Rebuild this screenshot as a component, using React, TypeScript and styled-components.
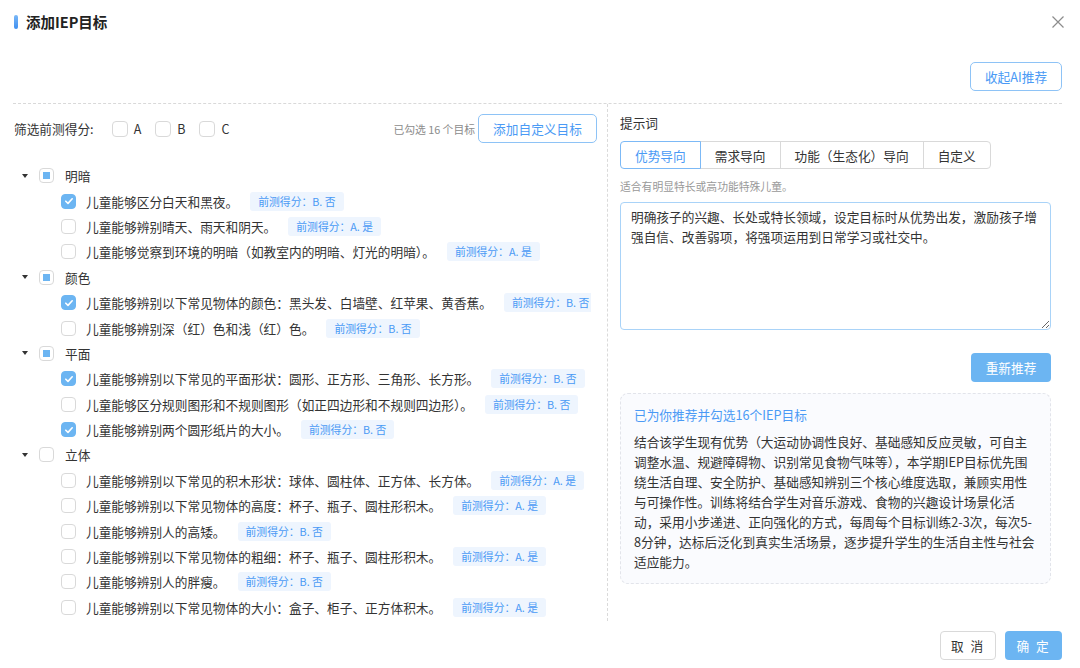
import React, { FC } from "react";
import styled, { createGlobalStyle } from "styled-components";

const GlobalStyle = createGlobalStyle`
  body {
    margin: 0;
    background: #fff;
    font-family: "Noto Sans CJK SC", "Noto Sans", sans-serif;
    color: #333;
  }
`;

const BLUE = "#4a9af5";
const LIGHT_BLUE = "#6cb5f2";
const FS = "12.7px";

const Modal = styled.div`
  width: 1080px;
  height: 668px;
  display: flex;
  flex-direction: column;
  background: #fff;
  overflow: hidden;
`;

const Header = styled.div`
  height: 43px;
  display: flex;
  align-items: center;
  justify-content: space-between;
  padding: 0 15px 0 14px;
`;

const Title = styled.div`
  display: flex;
  align-items: center;
  gap: 8px;
  font-size: 14.5px;
  font-weight: 700;
  color: #222;
`;

const TitleBar = styled.span`
  width: 4px;
  height: 14px;
  border-radius: 2px;
  background: linear-gradient(180deg, #7ab8f7, #3f8ff0);
`;

const CloseBtn = styled.button`
  border: none;
  background: none;
  padding: 0;
  width: 14px;
  height: 14px;
  cursor: pointer;
  display: flex;
`;

const Toolbar = styled.div`
  display: flex;
  justify-content: flex-end;
  padding: 19px 18px 12px;
`;

const GhostButton = styled.button<{ $w?: number }>`
  height: 29px;
  width: ${(p) => (p.$w ? `${p.$w}px` : "auto")};
  padding: 0;
  white-space: nowrap;
  border: 1px solid #8ec3f6;
  border-radius: 5px;
  background: #fff;
  color: ${BLUE};
  font-family: inherit;
  font-size: ${FS};
  cursor: pointer;
`;

const Body = styled.div`
  margin: 0 18px 0 13px;
  border-top: 1px dashed #d9d9d9;
  height: 517px;
  display: grid;
  grid-template-columns: 595px 1fr;
`;

const LeftCol = styled.div`
  border-right: 1px dashed #dadada;
  padding-right: 10px;
  display: flex;
  flex-direction: column;
  overflow: hidden;
`;

const FilterRow = styled.div`
  margin-top: 10px;
  height: 29px;
  display: flex;
  align-items: center;
  font-size: ${FS};
  padding-left: 1px;
`;

const FilterLabel = styled.span`
  margin-right: 18px;
`;

const FilterOption = styled.label`
  display: flex;
  align-items: center;
  gap: 6px;
  margin-right: 14px;
  font-size: 12.5px;
`;

const Spacer = styled.div`
  flex: 1;
`;

const Counter = styled.span`
  font-size: 10.8px;
  color: #8c8c8c;
  margin-right: 3px;
`;

const Tree = styled.div`
  margin-top: 20px;
  margin-right: 6px;
  overflow: hidden;
  flex: 1;
`;

const Row = styled.div<{ $child?: boolean }>`
  height: 25.4px;
  display: flex;
  align-items: center;
  white-space: nowrap;
  padding-left: ${(p) => (p.$child ? "48px" : "8px")};
  font-size: ${FS};
  color: #333;
`;

const Caret = styled.span`
  width: 8px;
  display: flex;
  justify-content: center;
  margin-right: 10px;
  &::before {
    content: "";
    border-left: 3.5px solid transparent;
    border-right: 3.5px solid transparent;
    border-top: 4.5px solid #333;
  }
`;

const Box = styled.span<{ $state: "on" | "off" | "half"; $size?: number }>`
  flex-shrink: 0;
  width: ${(p) => p.$size ?? 15}px;
  height: ${(p) => p.$size ?? 15}px;
  box-sizing: border-box;
  border-radius: 4px;
  border: 1px solid ${(p) => (p.$state === "on" ? LIGHT_BLUE : "#d9d9d9")};
  background: ${(p) => (p.$state === "on" ? LIGHT_BLUE : "#fff")};
  display: flex;
  align-items: center;
  justify-content: center;
  &::after {
    content: "";
    display: ${(p) => (p.$state === "half" ? "block" : "none")};
    width: 7px;
    height: 7px;
    background: ${LIGHT_BLUE};
  }
`;

const GroupLabel = styled.span`
  margin-left: 11px;
`;

const ItemText = styled.span`
  margin-left: 10px;
`;

const Tag = styled.span`
  flex-shrink: 0;
  margin-left: 12px;
  height: 19px;
  line-height: 19px;
  padding: 0 8px;
  border-radius: 3px;
  background: #eef5fe;
  color: ${BLUE};
  font-size: 10.8px;
`;

const RightCol = styled.div`
  padding: 9px 11px 0 12px;
  display: flex;
  flex-direction: column;
`;

const SectionLabel = styled.div`
  font-size: ${FS};
  line-height: 20px;
  margin-bottom: 8px;
`;

const Tabs = styled.div`
  display: flex;
`;

const TabItem = styled.div<{ $active?: boolean }>`
  height: 28px;
  box-sizing: border-box;
  padding: 0 14px;
  display: flex;
  align-items: center;
  font-size: ${FS};
  border: 1px solid ${(p) => (p.$active ? "#7cb9f6" : "#d9d9d9")};
  color: ${(p) => (p.$active ? BLUE : "#333")};
  margin-left: -1px;
  position: relative;
  z-index: ${(p) => (p.$active ? 1 : 0)};
  &:first-child {
    margin-left: 0;
    border-radius: 4px 0 0 4px;
  }
  &:last-child {
    border-radius: 0 4px 4px 0;
  }
`;

const Hint = styled.div`
  margin-top: 9px;
  font-size: 10.8px;
  color: #999;
  line-height: 16px;
`;

const Prompt = styled.textarea`
  margin-top: 8px;
  height: 128px;
  box-sizing: border-box;
  width: 100%;
  padding: 4px 10px;
  border: 1px solid #a9d3f8;
  border-radius: 4px;
  font-family: inherit;
  font-size: ${FS};
  line-height: 20px;
  color: #333;
  resize: vertical;
  outline: none;
`;

const Actions = styled.div`
  display: flex;
  justify-content: flex-end;
  margin-top: 23px;
`;

const SolidButton = styled.button<{ $w?: number; $spaced?: boolean }>`
  height: 29px;
  width: ${(p) => (p.$w ? `${p.$w}px` : "auto")};
  padding: 0;
  border: none;
  border-radius: 4px;
  background: ${LIGHT_BLUE};
  color: #fff;
  font-family: inherit;
  font-size: ${FS};
  letter-spacing: ${(p) => (p.$spaced ? "2px" : "0")};
  cursor: pointer;
`;

const RecBox = styled.div`
  margin-top: 11px;
  border: 1px dashed #e2e4ea;
  border-radius: 8px;
  background: #fafbfe;
  padding: 11px 13px 11px;
`;

const RecTitle = styled.div`
  font-size: ${FS};
  line-height: 20px;
  color: ${BLUE};
`;

const RecText = styled.div`
  margin-top: 7px;
  font-size: ${FS};
  line-height: 20px;
  color: #333;
`;

const Footer = styled.div`
  display: flex;
  justify-content: flex-end;
  gap: 9px;
  padding: 10px 18px 0;
`;

const PlainButton = styled.button`
  height: 29px;
  width: 56px;
  border: 1px solid #d9d9d9;
  border-radius: 4px;
  background: #fff;
  color: #333;
  font-family: inherit;
  font-size: ${FS};
  letter-spacing: 2px;
  cursor: pointer;
`;

type Item = { text: string; score: string; checked?: boolean };
type Group = { name: string; state: "on" | "off" | "half"; items: Item[] };

const groups: Group[] = [
  {
    name: "明暗",
    state: "half",
    items: [
      { text: "儿童能够区分白天和黑夜。", score: "B. 否", checked: true },
      { text: "儿童能够辨别晴天、雨天和阴天。", score: "A. 是" },
      { text: "儿童能够觉察到环境的明暗（如教室内的明暗、灯光的明暗）。", score: "A. 是" },
    ],
  },
  {
    name: "颜色",
    state: "half",
    items: [
      { text: "儿童能够辨别以下常见物体的颜色：黑头发、白墙壁、红苹果、黄香蕉。", score: "B. 否", checked: true },
      { text: "儿童能够辨别深（红）色和浅（红）色。", score: "B. 否" },
    ],
  },
  {
    name: "平面",
    state: "half",
    items: [
      { text: "儿童能够辨别以下常见的平面形状：圆形、正方形、三角形、长方形。", score: "B. 否", checked: true },
      { text: "儿童能够区分规则图形和不规则图形（如正四边形和不规则四边形）。", score: "B. 否" },
      { text: "儿童能够辨别两个圆形纸片的大小。", score: "B. 否", checked: true },
    ],
  },
  {
    name: "立体",
    state: "off",
    items: [
      { text: "儿童能够辨别以下常见的积木形状：球体、圆柱体、正方体、长方体。", score: "A. 是" },
      { text: "儿童能够辨别以下常见物体的高度：杯子、瓶子、圆柱形积木。", score: "A. 是" },
      { text: "儿童能够辨别人的高矮。", score: "B. 否" },
      { text: "儿童能够辨别以下常见物体的粗细：杯子、瓶子、圆柱形积木。", score: "A. 是" },
      { text: "儿童能够辨别人的胖瘦。", score: "B. 否" },
      { text: "儿童能够辨别以下常见物体的大小：盒子、柜子、正方体积木。", score: "A. 是" },
    ],
  },
];

const tabs = ["优势导向", "需求导向", "功能（生态化）导向", "自定义"];

const Check: FC<{ state: "on" | "off" | "half"; size?: number }> = ({ state, size }) => (
  <Box $state={state} $size={size}>
    {state === "on" && (
      <svg width="10" height="10" viewBox="0 0 10 10">
        <path d="M1.8 5.2l2.2 2.2 4.2-4.6" fill="none" stroke="#fff" strokeWidth="1.6" strokeLinecap="round" strokeLinejoin="round" />
      </svg>
    )}
  </Box>
);

const App: FC = () => {
  return (
    <>
      <GlobalStyle />
      <Modal>
        <Header>
          <Title>
            <TitleBar />
            添加IEP目标
          </Title>
          <CloseBtn aria-label="close">
            <svg width="14" height="14" viewBox="0 0 14 14">
              <path d="M1.5 1.5l11 11M12.5 1.5l-11 11" stroke="#8c8c8c" strokeWidth="1.2" />
            </svg>
          </CloseBtn>
        </Header>

        <Toolbar>
          <GhostButton $w={92}>收起AI推荐</GhostButton>
        </Toolbar>

        <Body>
          <LeftCol>
            <FilterRow>
              <FilterLabel>筛选前测得分:</FilterLabel>
              {["A", "B", "C"].map((l) => (
                <FilterOption key={l}>
                  <Check state="off" size={16} />
                  {l}
                </FilterOption>
              ))}
              <Spacer />
              <Counter>已勾选 16 个目标</Counter>
              <GhostButton $w={119}>添加自定义目标</GhostButton>
            </FilterRow>

            <Tree>
              {groups.map((g) => (
                <React.Fragment key={g.name}>
                  <Row>
                    <Caret />
                    <Check state={g.state} />
                    <GroupLabel>{g.name}</GroupLabel>
                  </Row>
                  {g.items.map((it) => (
                    <Row $child key={it.text}>
                      <Check state={it.checked ? "on" : "off"} />
                      <ItemText>{it.text}</ItemText>
                      <Tag>前测得分：{it.score}</Tag>
                    </Row>
                  ))}
                </React.Fragment>
              ))}
            </Tree>
          </LeftCol>

          <RightCol>
            <SectionLabel>提示词</SectionLabel>
            <Tabs>
              {tabs.map((t, i) => (
                <TabItem key={t} $active={i === 0}>
                  {t}
                </TabItem>
              ))}
            </Tabs>
            <Hint>适合有明显特长或高功能特殊儿童。</Hint>
            <Prompt
              defaultValue="明确孩子的兴趣、长处或特长领域，设定目标时从优势出发，激励孩子增强自信、改善弱项，将强项运用到日常学习或社交中。"
            />
            <Actions>
              <SolidButton $w={80}>重新推荐</SolidButton>
            </Actions>
            <RecBox>
              <RecTitle>已为你推荐并勾选16个IEP目标</RecTitle>
              <RecText>
                结合该学生现有优势（大运动协调性良好、基础感知反应灵敏，可自主调整水温、规避障碍物、识别常见食物气味等），本学期IEP目标优先围绕生活自理、安全防护、基础感知辨别三个核心维度选取，兼顾实用性与可操作性。训练将结合学生对音乐游戏、食物的兴趣设计场景化活动，采用小步递进、正向强化的方式，每周每个目标训练2-3次，每次5-8分钟，达标后泛化到真实生活场景，逐步提升学生的生活自主性与社会适应能力。
              </RecText>
            </RecBox>
          </RightCol>
        </Body>

        <Footer>
          <PlainButton>取 消</PlainButton>
          <SolidButton $w={57} $spaced>确 定</SolidButton>
        </Footer>
      </Modal>
    </>
  );
};

export default App;
